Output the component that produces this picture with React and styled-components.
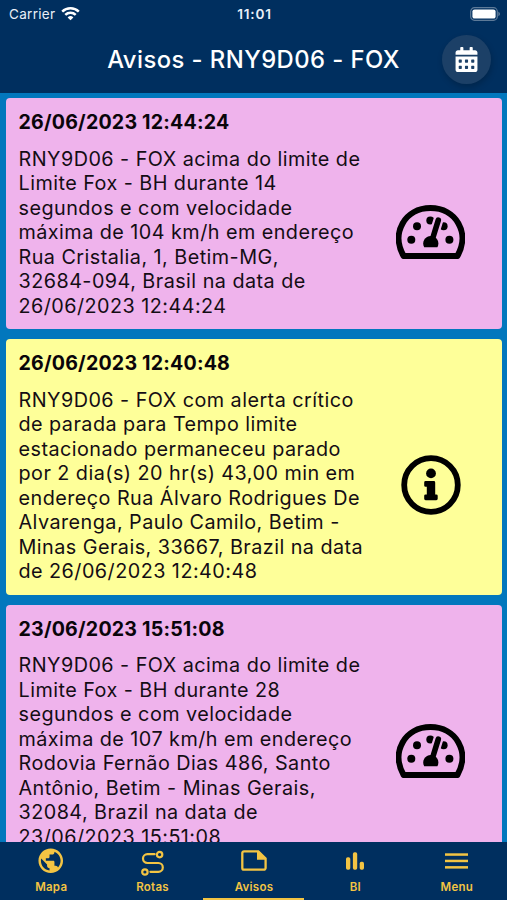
import React from 'react';
import styled, { createGlobalStyle } from 'styled-components';
import { FaCalendarAlt } from 'react-icons/fa';
import { MdPublic } from 'react-icons/md';

const GlobalStyle = createGlobalStyle`
    * {
        box-sizing: border-box;
    }
    body {
        margin: 0;
        overflow: hidden;
        font-family: Inter, 'Liberation Sans', sans-serif;
    }
`

const Screen = styled.div`
    width: 507px;
    height: 900px;
    display: flex;
    flex-direction: column;
    background: #0277bd;
    overflow: hidden;
`

const Header = styled.header`
    flex: none;
    height: 93px;
    background: #002f5f;
    color: #fff;
`

const StatusBar = styled.div`
    display: grid;
    grid-template-columns: 1fr auto 1fr;
    align-items: center;
    height: 27px;
    padding: 0 7px 0 9px;
    font-size: 13.5px;
    color: #e9eff7;
`

const Carrier = styled.div`
    display: flex;
    align-items: center;
    gap: 6px;
    letter-spacing: 0.3px;
`

const Clock = styled.div`
    font-size: 13.6px;
    font-weight: 600;
    letter-spacing: 0.8px;
`

const Battery = styled.div`
    display: flex;
    justify-content: flex-end;
`

const TitleBar = styled.div`
    display: grid;
    grid-template-columns: 65px 1fr 65px;
    align-items: center;
    height: 65px;
`

const Title = styled.h1`
    grid-column: 2;
    margin: 0;
    text-align: center;
    white-space: nowrap;
    font-size: 23.8px;
    line-height: 30px;
    font-weight: 500;
    letter-spacing: 0.45px;
`

const DateButton = styled.button`
    display: flex;
    align-items: center;
    justify-content: center;
    width: 49px;
    height: 49px;
    padding: 0;
    border: 0;
    border-radius: 50%;
    background: #1c4067;
    color: #fff;
    box-shadow: 1px 3px 6px rgba(0, 0, 0, 0.2);
`

const List = styled.main`
    flex: 1;
    min-height: 0;
    display: flex;
    flex-direction: column;
    gap: 10px;
    padding: 5.3px 5px 0 6px;
    overflow: hidden;
`

const Card = styled.article`
    flex: none;
    display: flex;
    align-items: center;
    height: ${(props) => props.$height}px;
    padding-left: 12.5px;
    border-radius: 4px;
    background: ${(props) => props.$color};
    color: #140d14;
`

const CardBody = styled.div`
    width: 352px;
    align-self: flex-start;
    padding-top: 12px;
`

const CardDate = styled.h2`
    margin: 0 0 12.3px;
    font-size: 19.6px;
    line-height: 24px;
    font-weight: 700;
    letter-spacing: 0.2px;
    color: #0a050a;
`

const Line = styled.div`
    height: 24.5px;
    line-height: 24.5px;
    font-size: 19.8px;
    letter-spacing: 0.46px;
    white-space: nowrap;
`

const CardIcon = styled.div`
    flex: 1;
    display: flex;
    justify-content: center;
    padding: 36px 12px 0 0;
`

const Nav = styled.nav`
    flex: none;
    display: grid;
    grid-template-columns: repeat(5, 1fr);
    height: 58.5px;
    background: #002f5f;
`

const NavItem = styled.div`
    display: flex;
    flex-direction: column;
    align-items: center;
    padding: 4px 0 0 1px;
    color: #f3c443;
    border-bottom: 2.5px solid ${(props) => (props.$active ? '#f3c443' : 'transparent')};
`

const NavIcon = styled.div`
    display: flex;
    align-items: center;
    justify-content: center;
    height: 30px;
`

const NavLabel = styled.span`
    margin-top: 4px;
    font-size: 11.5px;
    line-height: 15px;
    font-weight: 600;
    letter-spacing: 0.25px;
`

const WifiIcon = () => (
    <svg width="19" height="15" viewBox="0 0 19 15" fill="none" stroke="#fff" strokeWidth="2.5">
        <path d="M1.2 5.6a12 12 0 0 1 16.6 0" />
        <path d="M4.3 8.9a7.4 7.4 0 0 1 10.4 0" />
        <path d="M9.5 14.3 6.6 11.4a4.2 4.2 0 0 1 5.8 0z" fill="#fff" stroke="none" />
    </svg>
)

const BatteryIcon = () => (
    <svg width="30" height="14" viewBox="0 0 30 14">
        <rect x="0.7" y="0.7" width="26.6" height="12.6" rx="3.8" fill="none" stroke="#5d7a98" strokeWidth="1.2" />
        <rect x="2.4" y="2.4" width="23.2" height="9.2" rx="2.2" fill="#fff" />
        <path d="M28.5 4.8c1.6.7 1.6 3.7 0 4.4z" fill="#8096ad" />
    </svg>
)

const GaugeIcon = ({ background }) => (
    <svg width="69" height="54" viewBox="0 0 69 54">
        <path
            d="M7.6 51C-5.5 28 9 3.1 34.5 3.1S74.5 28 61.4 51z"
            fill="none"
            stroke="#000"
            strokeWidth="6"
            strokeLinejoin="round"
        />
        <circle cx="21" cy="21.3" r="4" />
        <circle cx="15.3" cy="34.7" r="4" />
        <circle cx="53.4" cy="34.7" r="4" />
        <circle cx="34.3" cy="15.6" r="4" />
        <circle cx="47.6" cy="21.3" r="4" />
        <path d="M42.3 15.2 36.5 34" stroke={background} strokeWidth="10" strokeLinecap="round" />
        <path d="M42.3 15.2 36.5 34" stroke="#000" strokeWidth="5.6" strokeLinecap="round" />
        <path d="M28.2 42.3a7.6 7.6 0 1 1 13.2 0z" />
    </svg>
)

const InfoIcon = () => (
    <svg width="61" height="60" viewBox="-1 0 61 60">
        <circle cx="30" cy="30" r="26.8" fill="none" stroke="#000" strokeWidth="5.8" />
        <circle cx="30" cy="18.4" r="4.9" />
        <path d="M24.6 26h8.2q1.4 0 1.4 1.4v12h1.1q1.4 0 1.4 1.4v3q0 1.4-1.4 1.4H24.6q-1.4 0-1.4-1.4v-3q0-1.4 1.4-1.4h1.2v-7.6h-1.2q-1.4 0-1.4-1.4v-3Q23.2 26 24.6 26z" />
    </svg>
)

const RouteIcon = () => (
    <svg width="24" height="30" viewBox="0 0 24 30" fill="none" stroke="currentColor" strokeWidth="2.2">
        <circle cx="18.6" cy="8.6" r="2.7" />
        <circle cx="3.9" cy="26" r="2.7" />
        <path d="M13.6 8.2H6.4a4.4 4.4 0 0 0 0 8.8h11a4.4 4.4 0 0 1 0 8.8H9.4" strokeLinecap="round" />
    </svg>
)

const NoteIcon = () => (
    <svg width="26" height="21" viewBox="0 0 26 21">
        <path
            d="M3 1.4h14.3l7.3 7v9.5a1.7 1.7 0 0 1-1.7 1.7H3a1.7 1.7 0 0 1-1.7-1.7V3.1A1.7 1.7 0 0 1 3 1.4z"
            fill="none"
            stroke="currentColor"
            strokeWidth="2.3"
        />
        <path d="M16 1.4h1.8l7 6.8v1.5H16z" fill="currentColor" />
    </svg>
)

const BarsIcon = () => (
    <svg width="18" height="18" viewBox="0 0 18 18" fill="currentColor">
        <rect x="0" y="5.2" width="4.3" height="12.5" rx="1.7" />
        <rect x="6.9" y="0.2" width="4.3" height="17.5" rx="1.7" />
        <rect x="13.7" y="9.8" width="4.3" height="7.9" rx="1.7" />
    </svg>
)

const MenuIcon = () => (
    <svg width="23" height="16" viewBox="0 0 23 16" fill="currentColor">
        <rect y="0.3" width="23" height="2.5" />
        <rect y="6.7" width="23" height="2.5" />
        <rect y="13.1" width="23" height="2.5" />
    </svg>
)

const PINK = '#efb3ec'
const YELLOW = '#feff99'

const avisos = [
    {
        type: 'speed',
        date: '26/06/2023 12:44:24',
        height: 231,
        lines: [
            'RNY9D06 - FOX acima do limite de',
            'Limite Fox - BH durante 14',
            'segundos e com velocidade',
            'máxima de 104 km/h em endereço',
            'Rua Cristalia, 1, Betim-MG,',
            '32684-094, Brasil na data de',
            '26/06/2023 12:44:24',
        ],
    },
    {
        type: 'info',
        date: '26/06/2023 12:40:48',
        height: 255.5,
        lines: [
            'RNY9D06 - FOX com alerta crítico',
            'de parada para Tempo limite',
            'estacionado permaneceu parado',
            'por 2 dia(s) 20 hr(s) 43,00 min em',
            'endereço Rua Álvaro Rodrigues De',
            'Alvarenga, Paulo Camilo, Betim -',
            'Minas Gerais, 33667, Brazil na data',
            'de 26/06/2023 12:40:48',
        ],
    },
    {
        type: 'speed',
        date: '23/06/2023 15:51:08',
        height: 255.5,
        lines: [
            'RNY9D06 - FOX acima do limite de',
            'Limite Fox - BH durante 28',
            'segundos e com velocidade',
            'máxima de 107 km/h em endereço',
            'Rodovia Fernão Dias 486, Santo',
            'Antônio, Betim - Minas Gerais,',
            '32084, Brazil na data de',
            '23/06/2023 15:51:08',
        ],
    },
]

const tabs = [
    { label: 'Mapa', icon: <MdPublic size={29.5} /> },
    { label: 'Rotas', icon: <RouteIcon /> },
    { label: 'Avisos', icon: <NoteIcon />, active: true },
    { label: 'BI', icon: <BarsIcon /> },
    { label: 'Menu', icon: <MenuIcon /> },
]

const App = () => {
    return (
        <Screen>
            <GlobalStyle />
            <Header>
                <StatusBar>
                    <Carrier>
                        Carrier
                        <WifiIcon />
                    </Carrier>
                    <Clock>11:01</Clock>
                    <Battery>
                        <BatteryIcon />
                    </Battery>
                </StatusBar>
                <TitleBar>
                    <Title>Avisos - RNY9D06 - FOX</Title>
                    <DateButton>
                        <FaCalendarAlt size={25} />
                    </DateButton>
                </TitleBar>
            </Header>

            <List>
                {avisos.map((aviso) => {
                    const color = aviso.type === 'speed' ? PINK : YELLOW
                    return (
                        <Card key={aviso.date} $height={aviso.height} $color={color}>
                            <CardBody>
                                <CardDate>{aviso.date}</CardDate>
                                {aviso.lines.map((line) => (
                                    <Line key={line}>{line}</Line>
                                ))}
                            </CardBody>
                            <CardIcon>
                                {aviso.type === 'speed' ? <GaugeIcon background={color} /> : <InfoIcon />}
                            </CardIcon>
                        </Card>
                    )
                })}
            </List>

            <Nav>
                {tabs.map((tab) => (
                    <NavItem key={tab.label} $active={tab.active}>
                        <NavIcon>{tab.icon}</NavIcon>
                        <NavLabel>{tab.label}</NavLabel>
                    </NavItem>
                ))}
            </Nav>
        </Screen>
    );
};

export default App;
